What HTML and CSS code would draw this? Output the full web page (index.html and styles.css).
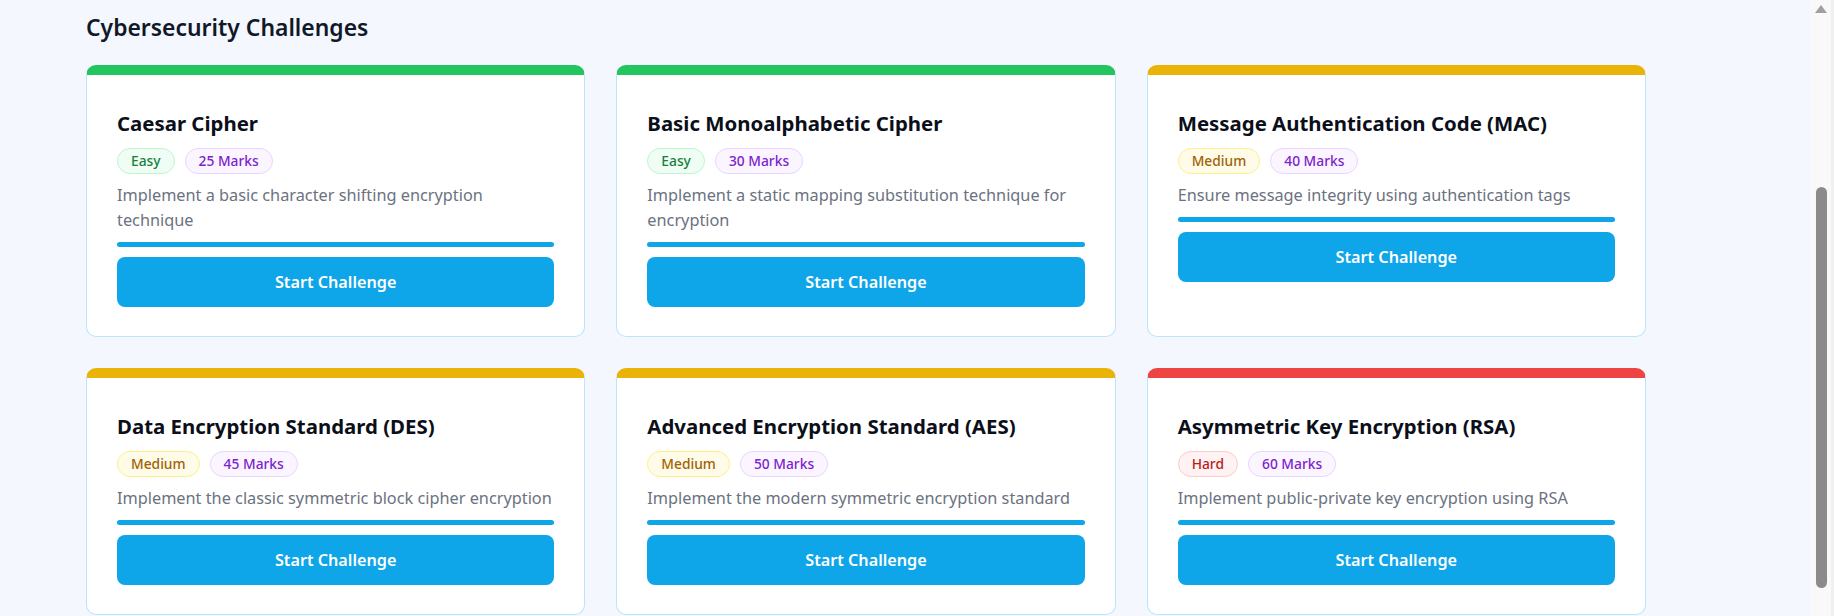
FILE: index.html
```html
<!DOCTYPE html>
<html lang="en">
<head>
<meta charset="utf-8">
<title>Cybersecurity Challenges</title>
<link rel="stylesheet" href="styles.css">
</head>
<body>
<div class="page">
  <main class="main">
    <h1 class="heading">Cybersecurity Challenges</h1>
    <div class="grid">
      <article class="card easy">
        <h2 class="card-title">Caesar Cipher</h2>
        <div class="badges">
          <span class="badge badge-easy">Easy</span>
          <span class="badge badge-marks">25 Marks</span>
        </div>
        <p class="desc">Implement a basic character shifting encryption technique</p>
        <div class="progress"></div>
        <button class="btn">Start Challenge</button>
      </article>
      <article class="card easy">
        <h2 class="card-title">Basic Monoalphabetic Cipher</h2>
        <div class="badges">
          <span class="badge badge-easy">Easy</span>
          <span class="badge badge-marks">30 Marks</span>
        </div>
        <p class="desc">Implement a static mapping substitution technique for encryption</p>
        <div class="progress"></div>
        <button class="btn">Start Challenge</button>
      </article>
      <article class="card medium">
        <h2 class="card-title">Message Authentication Code (MAC)</h2>
        <div class="badges">
          <span class="badge badge-medium">Medium</span>
          <span class="badge badge-marks">40 Marks</span>
        </div>
        <p class="desc">Ensure message integrity using authentication tags</p>
        <div class="progress"></div>
        <button class="btn">Start Challenge</button>
      </article>
      <article class="card medium">
        <h2 class="card-title">Data Encryption Standard (DES)</h2>
        <div class="badges">
          <span class="badge badge-medium">Medium</span>
          <span class="badge badge-marks">45 Marks</span>
        </div>
        <p class="desc">Implement the classic symmetric block cipher encryption</p>
        <div class="progress"></div>
        <button class="btn">Start Challenge</button>
      </article>
      <article class="card medium">
        <h2 class="card-title">Advanced Encryption Standard (AES)</h2>
        <div class="badges">
          <span class="badge badge-medium">Medium</span>
          <span class="badge badge-marks">50 Marks</span>
        </div>
        <p class="desc">Implement the modern symmetric encryption standard</p>
        <div class="progress"></div>
        <button class="btn">Start Challenge</button>
      </article>
      <article class="card hard">
        <h2 class="card-title">Asymmetric Key Encryption (RSA)</h2>
        <div class="badges">
          <span class="badge badge-hard">Hard</span>
          <span class="badge badge-marks">60 Marks</span>
        </div>
        <p class="desc">Implement public-private key encryption using RSA</p>
        <div class="progress"></div>
        <button class="btn">Start Challenge</button>
      </article>
    </div>
  </main>
  <div class="scrollbar">
    <div class="scroll-arrow"></div>
    <div class="scroll-thumb"></div>
  </div>
</div>
</body>
</html>
```
FILE: styles.css
```css
* { box-sizing: border-box; }

html, body {
  margin: 0;
  padding: 0;
  height: 616px;
  overflow: hidden;
  background: #f4f7fd;
  font-family: "Noto Sans", "Open Sans", sans-serif;
}

.page {
  display: flex;
  height: 616px;
}

.main {
  flex: 1;
  padding: 12px 0 0 86px;
}

.heading {
  margin: 0 0 21px;
  font-size: 22.9px;
  line-height: 32px;
  font-weight: 600;
  color: #111827;
}

.grid {
  width: 1560px;
  display: grid;
  grid-template-columns: repeat(3, 1fr);
  gap: 31px;
}

.card {
  display: flex;
  flex-direction: column;
  background: #ffffff;
  border: 1px solid #bae6fd;
  border-top: 10px solid #22c55e;
  border-radius: 10px;
  padding: 34px 30px 29px;
}

.card.easy { border-top-color: #22c55e; }
.card.medium { border-top-color: #eab308; }
.card.hard { border-top-color: #ef4444; }

.card-title {
  margin: 0 0 11px;
  font-size: 20.4px;
  line-height: 28px;
  font-weight: 700;
  color: #0b0f1a;
}

.badges {
  display: flex;
  gap: 10px;
  margin-bottom: 9px;
}

.badge {
  display: inline-block;
  height: 26px;
  line-height: 24px;
  padding: 0 13px;
  border: 1px solid;
  border-radius: 13px;
  font-size: 13.8px;
  font-weight: 500;
}

.badge-easy { background: #f0fdf4; border-color: #bbf7d0; color: #15803d; }
.badge-medium { background: #fefce8; border-color: #fef08a; color: #a16207; }
.badge-hard { background: #fef2f2; border-color: #fecaca; color: #b91c1c; }
.badge-marks { background: #faf5ff; border-color: #e9d5ff; color: #7e22ce; }

.desc {
  margin: 0 0 9px;
  font-size: 16.3px;
  line-height: 25px;
  color: #6b7280;
}

.progress {
  height: 5px;
  border-radius: 3px;
  background: #0ea5e9;
  margin-bottom: 10px;
}

.btn {
  height: 50px;
  border: 0;
  border-radius: 8px;
  background: #0ea5e9;
  color: #ffffff;
  font-family: inherit;
  font-size: 16.2px;
  font-weight: 600;
}

.scrollbar {
  width: 23px;
  background: #f9f9f9;
  border-right: 3px solid #f0f0f0;
  display: flex;
  flex-direction: column;
  align-items: center;
}

.scroll-arrow {
  margin-top: 5px;
  width: 0;
  height: 0;
  border-left: 6px solid transparent;
  border-right: 6px solid transparent;
  border-bottom: 8px solid #a0a0a0;
}

.scroll-thumb {
  margin-top: 174px;
  width: 11px;
  height: 401px;
  border-radius: 6px;
  background: #8b8b8b;
}
```
